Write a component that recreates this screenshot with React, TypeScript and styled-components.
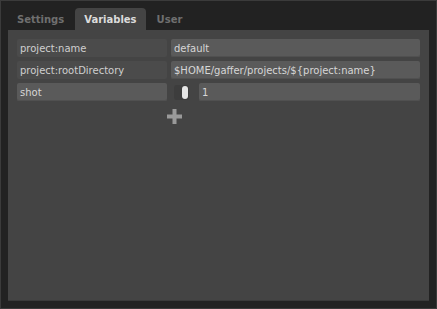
import React from 'react'
import styled, { createGlobalStyle } from 'styled-components'

const GlobalStyle = createGlobalStyle`
  html, body { margin: 0; padding: 0; background: #222222; }
  body { font-family: "DejaVu Sans", sans-serif; }
`

type Variable = {
  name: string
  value: string
  custom?: boolean
}

const variables: Variable[] = [
  { name: 'project:name', value: 'default' },
  { name: 'project:rootDirectory', value: '$HOME/gaffer/projects/${project:name}' },
  { name: 'shot', value: '1', custom: true },
]

export default function App() {
  return (
    <Window>
      <GlobalStyle />
      <TabBar>
        <Tab>Settings</Tab>
        <Tab $active>Variables</Tab>
        <Tab>User</Tab>
      </TabBar>
      <Panel>
        {variables.map((v) => (
          <Row key={v.name}>
            <Field $editable={!!v.custom}>{v.name}</Field>
            {v.custom ? (
              <ValueGroup>
                <Toggle>
                  <Knob />
                </Toggle>
                <Field $editable>{v.value}</Field>
              </ValueGroup>
            ) : (
              <Field $editable>{v.value}</Field>
            )}
          </Row>
        ))}
        <AddRow>
          <PlusIcon width="15" height="15" viewBox="0 0 15 15">
            <rect x="5.5" y="0" width="4" height="15" fill="#9a9a9a" />
            <rect x="0" y="5.5" width="15" height="4" fill="#9a9a9a" />
          </PlusIcon>
        </AddRow>
      </Panel>
    </Window>
  )
}

const Window = styled.div`
  box-sizing: border-box;
  width: 437px;
  height: 309px;
  border: 1px solid #3b3b3b;
  background: #222222;
  padding: 7px 7px 7px 7px;
  display: flex;
  flex-direction: column;
`

const TabBar = styled.div`
  display: flex;
  height: 22px;
`

const Tab = styled.div<{ $active?: boolean }>`
  display: flex;
  align-items: center;
  padding: 0 9px;
  font-size: 10px;
  font-weight: bold;
  border-radius: 4px 4px 0 0;
  color: ${(p) => (p.$active ? '#dcdcdc' : '#6f6f6f')};
  background: ${(p) => (p.$active ? '#444444' : 'transparent')};
  margin-left: ${(p) => (p.$active ? '2px' : '0')};
  margin-right: ${(p) => (p.$active ? '2px' : '0')};
`

const Panel = styled.div`
  flex: 1;
  background: #444444;
  border-bottom: 1px solid #3a3a3a;
  padding: 9px 9px 0 9px;
  display: flex;
  flex-direction: column;
  gap: 4px;
`

const Row = styled.div`
  display: grid;
  grid-template-columns: 150px 1fr;
  column-gap: 4px;
  height: 18px;
`

const Field = styled.div<{ $editable: boolean }>`
  box-sizing: border-box;
  height: 18px;
  display: flex;
  align-items: center;
  padding: 0 3px;
  font-size: 10px;
  border-radius: 2px;
  color: ${(p) => (p.$editable ? '#d6d6d6' : '#cfcfcf')};
  background: ${(p) => (p.$editable ? '#5a5a5a' : '#4b4b4b')};
  box-shadow: ${(p) => (p.$editable ? 'inset 0 -1px 0 #505050' : 'none')};
  white-space: nowrap;
  overflow: hidden;
`

const ValueGroup = styled.div`
  display: flex;
  align-items: center;
  gap: 10px;
  & > ${Field} {
    flex: 1;
  }
`

const Toggle = styled.div`
  box-sizing: border-box;
  width: 15px;
  height: 15px;
  margin-left: 3px;
  border-radius: 3px;
  background: #3d3d3d;
  display: flex;
  justify-content: flex-end;
  padding: 1px;
`

const Knob = styled.div`
  width: 6px;
  height: 13px;
  border-radius: 3px;
  background: #e6e6e6;
`

const AddRow = styled.div`
  display: flex;
  padding-left: 150px;
  margin-top: 4px;
`

const PlusIcon = styled.svg`
  display: block;
`
